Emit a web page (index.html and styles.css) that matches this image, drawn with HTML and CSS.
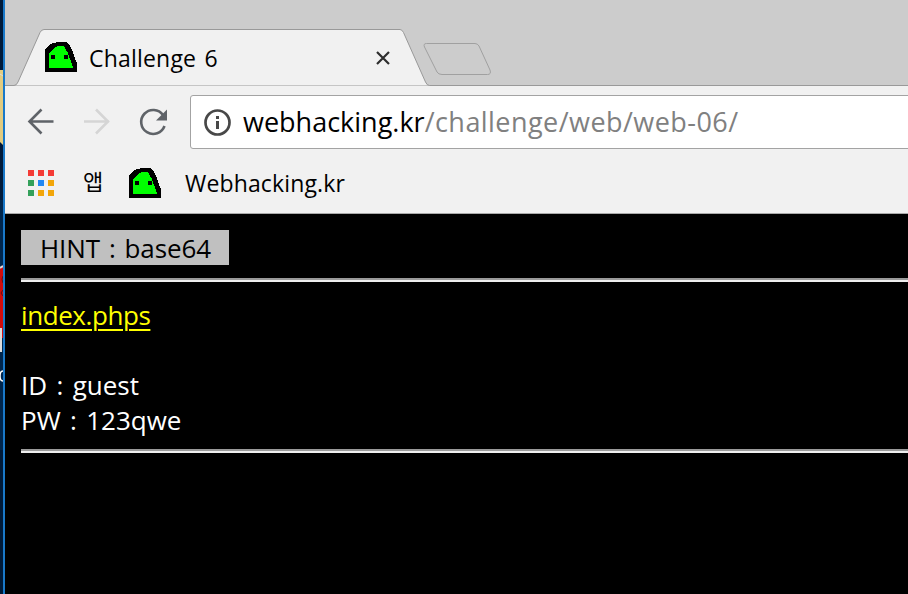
FILE: index.html
```
<!DOCTYPE html>
<html lang="ko">
<head>
<meta charset="utf-8">
<title>Challenge 6</title>
<link rel="stylesheet" href="styles.css">
</head>
<body>
<svg width="0" height="0" class="defs">
  <symbol id="ghost" viewBox="0 0 32 30">
    <path fill="#000" d="M0 30V8L2 5L5 2L9 1L12 0H22L25 4L28 10L30 16L31 20L32 21V30Z"/>
    <path fill="#0f0" d="M4 26V11L6 10L8 7L11 5L13 4H18L20 6L23 11L25 17L27 22L28 26Z"/>
    <path fill="#000" d="M6 13h4v4H6zM19 13h4v4h-4z"/>
  </symbol>
</svg>
<div class="screen">
  <svg class="desktop" width="3" height="594" viewBox="0 0 3 594">
    <rect width="3" height="594" fill="#001a3a"/>
    <rect y="200" width="3" height="394" fill="#00264d"/>
    <rect y="450" width="3" height="144" fill="#001a38"/>
    <path d="M0 70H3V145L0 142Z" fill="#e3cc80"/>
    <path d="M0 74L3 76" stroke="#ddd"/>
    <path d="M0 268L3 265V338H0Z" fill="#d40b0b"/>
    <path d="M0 268L3 266" stroke="#ddd" stroke-width="2"/>
    <path d="M3 276Q1 279 3 283M3 290L1 293L3 296" stroke="#601015" fill="none"/>
    <path d="M0 328H2V352H0Z" fill="#ddd"/>
    <path d="M3 371Q0 371 0 376T3 381" stroke="#fff" stroke-width="1.5" fill="none"/>
  </svg>
  <div class="window">
    <header class="tabs">
      <svg class="tab-shape" width="903" height="86" viewBox="0 0 903 86">
        <path d="M0 86V85.500H9Q11.500 85.500 13 82L35 32.500Q36.500 29.500 39 29.500H395Q397 29.500 398.500 32.500L420.500 82Q422 85.500 424.500 85.500H903V86Z" fill="#f1f1f1" stroke="#999"/>
        <path d="M421.500 43.500H470Q472.500 43.500 474 46L485 70Q486.500 74.500 482.500 74.500H437Q433.500 74.500 432 72L419.500 47Q418 43.500 421.500 43.500Z" fill="#ccc" stroke="#a0a0a0"/>
      </svg>
      <div class="tab">
        <svg class="ghost"><use href="#ghost"/></svg>
        <span class="tab-title">Challenge 6</span>
        <svg class="close" width="16" height="16" viewBox="0 0 16 16"><path d="M2 2L14 14M14 2L2 14" stroke="#2e2e2e" stroke-width="2.200"/></svg>
      </div>
    </header>
    <div class="toolbar">
      <svg class="nav" width="150" height="34" viewBox="0 0 150 34" fill="none" stroke="#5f6368" stroke-width="2.600">
        <path d="M30.500 16.500H6M18.500 4.500L6.500 16.500L18.500 28.500"/>
        <path d="M61 16.500H86M73 4.500L85 16.500L73 28.500" stroke="#d5d5d5"/>
        <path d="M140 10A12 12 0 1 0 141.500 21"/>
        <path d="M144 4.500V15.500H133Z" fill="#5f6368" stroke="none"/>
      </svg>
      <div class="omnibox">
        <svg width="28" height="28" viewBox="0 0 28 28"><circle cx="14.500" cy="14.500" r="12" fill="none" stroke="#484848" stroke-width="2.700"/><path d="M13 8h3v3h-3zM13 13h3v8h-3z" fill="#484848"/></svg>
        <span class="url"><span class="host">webhacking.kr</span><span class="path">/challenge/web/web-06/</span></span>
      </div>
    </div>
    <nav class="bookmarks">
      <div class="apps"><i class="r"></i><i class="r"></i><i class="r"></i><i class="g"></i><i class="b"></i><i class="y"></i><i class="g"></i><i class="y"></i><i class="y"></i></div>
      <span class="apps-label">앱</span>
      <svg class="ghost"><use href="#ghost"/></svg>
      <span class="bookmark">Webhacking.kr</span>
    </nav>
    <main class="page">
      <div class="hint"><span>HINT : base64</span></div>
      <div class="rule"></div>
      <a class="source" href="#">index.phps</a>
      <div class="account">ID : guest</div>
      <div class="account">PW : 123qwe</div>
      <div class="rule last"></div>
    </main>
  </div>
</div>
</body>
</html>
```
FILE: styles.css
```
* { box-sizing: border-box; }
body { margin: 0; background: #000; overflow: hidden; font-family: "Open Sans", "Noto Sans CJK KR", sans-serif; }
svg { display: block; flex: none; }
.defs { display: none; }
.screen { display: flex; width: 908px; height: 594px; overflow: hidden; }
.window { width: 905px; border-left: 2px solid #1979ca; background: #f1f1f1; white-space: nowrap; overflow: hidden; }
.tabs { display: grid; height: 86px; background: #ccc; }
.tabs > * { grid-area: 1 / 1; }
.tab { display: flex; align-items: flex-start; height: 86px; padding-left: 40px; }
.ghost { width: 32px; height: 30px; shape-rendering: crispEdges; }
.tab .ghost { margin-top: 42px; }
.tab-title { width: 281px; margin: 42px 0 0 12px; font-size: 23px; line-height: 32px; letter-spacing: .2px; word-spacing: 2px; }
.close { margin-top: 50px; margin-left: 5px; }
.toolbar { display: flex; height: 64px; padding-top: 9px; }
.nav { margin: 10px 17px 0 18px; }
.omnibox { display: flex; flex: none; align-items: center; width: 730px; height: 54px; padding-left: 12px; border: 1px solid #a3a3a3; border-radius: 3px; background: #fff; }
.url { margin-left: 12px; font-size: 27px; line-height: 52px; }
.path { color: #808080; letter-spacing: .45px; }
.bookmarks { display: flex; height: 64px; padding: 18px 0 0 23px; border-bottom: 1px solid #aaa; }
.apps { display: grid; grid-template-columns: repeat(3, 6px); grid-auto-rows: 6px; gap: 4px; margin-top: 2px; }
.r { background: #f43b36; }
.g { background: #33a05a; }
.b { background: #2188f4; }
.y { background: #f2a60a; }
.apps-label { width: 46px; margin-left: 29px; font-size: 22px; line-height: 26px; }
.bookmark { margin-left: 24px; font-size: 23px; line-height: 31px; letter-spacing: .15px; }
.page { height: 380px; padding: 16px 0 0 16px; background: #000; color: #fff; font-size: 26px; line-height: 35px; }
.hint { width: 208px; height: 35px; padding: 1px 0 0 19px; background: #c0c0c0; color: #000; letter-spacing: -.1px; word-spacing: 2.3px; }
.rule { height: 4px; margin: 13px 0 16px; border-top: 2px solid #9a9a9a; border-bottom: 2px solid #eee; }
.source { display: block; height: 35px; margin-bottom: 35px; color: #ff0; letter-spacing: -.42px; text-decoration-thickness: 2px; text-underline-offset: 4px; text-decoration-skip-ink: auto; }
.account { word-spacing: 2.6px; }
.last { margin: 11px 0 0; }
```
